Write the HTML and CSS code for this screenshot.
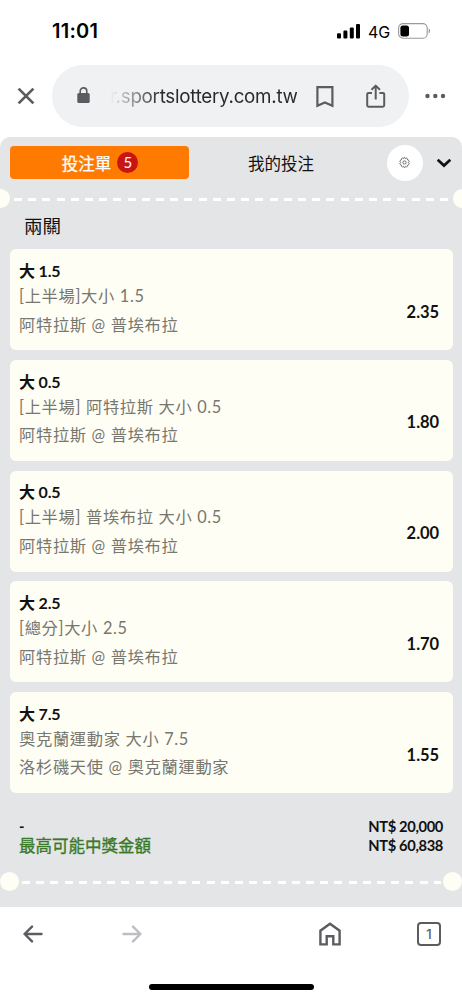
FILE: index.html
```html
<!DOCTYPE html>
<html lang="zh-Hant">
<head>
<meta charset="utf-8">
<meta name="viewport" content="width=device-width, initial-scale=1">
<title>投注單</title>
<link rel="stylesheet" href="styles.css">
</head>
<body>
<div class="screen">
  <header class="status">
    <span class="clock">11:01</span>
    <div class="status-icons">
      <svg class="signal" width="24" height="15" viewBox="0 0 24 15"><rect x="0" y="9.3" width="4" height="5.2" rx="1.1"/><rect x="6.4" y="6.6" width="4" height="7.9" rx="1.1"/><rect x="12.8" y="3.5" width="4" height="11" rx="1.1"/><rect x="19" y="0" width="4" height="14.5" rx="1.1"/></svg>
      <span class="network">4G</span>
      <svg class="battery" width="34" height="16" viewBox="0 0 34 16"><rect x=".6" y=".6" width="28.6" height="14.6" rx="4.5" fill="none" stroke="#999" stroke-width="1.1"/><rect x="2.4" y="2.4" width="8.6" height="11" rx="2.5"/><path d="M30.7 5.3c1.8.7 1.8 4.4 0 5.2z" fill="#999"/></svg>
    </div>
  </header>

  <div class="toolbar">
    <svg class="close" width="18" height="18" viewBox="0 0 18 18"><path d="M1.6 1.6l14.8 14.8M16.4 1.6L1.6 16.4"/></svg>
    <div class="address">
      <svg class="lock" width="13" height="17" viewBox="0 0 13 17"><rect x=".3" y="6" width="12.4" height="10" rx="1.6" fill="#5b5c60"/><path d="M3.2 7V4.2a3.3 3.3 0 0 1 6.6 0V7" fill="none" stroke="#5b5c60" stroke-width="1.6"/></svg>
      <span class="url">r.sportslottery.com.tw</span>
      <svg class="bookmark" width="18" height="22" viewBox="0 0 18 22"><path d="M1.4 1.2h15v18.6l-7.5-3.3-7.5 3.3z"/></svg>
      <svg class="share" width="20" height="24" viewBox="0 0 20 24"><path d="M6 9H2.5Q1.2 9 1.2 10.3v11q0 1.4 1.4 1.4h14.2q1.4 0 1.4-1.4v-11Q18.2 9 16.9 9H13.4M9.7 15.5V1.8M5.5 5.8l4.2-4.2 4.2 4.2"/></svg>
    </div>
    <svg class="more" width="21" height="6" viewBox="0 0 21 6"><circle cx="2.5" cy="3" r="2.2"/><circle cx="10.3" cy="3" r="2.2"/><circle cx="18" cy="3" r="2.2"/></svg>
  </div>

  <main class="panel">
    <div class="tabs">
      <div class="tab active">投注單<span class="count">5</span></div>
      <div class="tab">我的投注</div>
      <div class="settings">
        <svg width="12" height="12" viewBox="0 0 12 12"><path d="M4.8 1.8L5.3.8h1.4l.5 1 1.2-.6 1.1.9-.1 1.1 1.1.4.5 1.4-.8 1 .8 1-.5 1.4-1.1.4.1 1.1-1.1.9-1.2-.6-.5 1H5.3l-.5-1-1.2.6-1.1-.9.1-1.1-1.1-.4L1 7l.8-1L1 5l.5-1.4 1.1-.4-.1-1.1 1.1-.9z"/><circle cx="6" cy="6" r="1.8"/></svg>
      </div>
      <svg class="chevron" width="16" height="10" viewBox="0 0 16 10"><path d="M1.7 1.8L8 7.6l6.3-5.8"/></svg>
    </div>

    <div class="perforation edge"><i class="hole"></i><i class="dashes"></i><i class="hole"></i></div>

    <h1 class="section">兩關</h1>
    <section class="bets">
      <article class="bet"><div class="info"><h2>大 1.5</h2><p>[上半場]大小 1.5</p><p>阿特拉斯 @ 普埃布拉</p></div><b class="odds">2.35</b></article>
      <article class="bet"><div class="info"><h2>大 0.5</h2><p>[上半場] 阿特拉斯 大小 0.5</p><p>阿特拉斯 @ 普埃布拉</p></div><b class="odds">1.80</b></article>
      <article class="bet"><div class="info"><h2>大 0.5</h2><p>[上半場] 普埃布拉 大小 0.5</p><p>阿特拉斯 @ 普埃布拉</p></div><b class="odds">2.00</b></article>
      <article class="bet"><div class="info"><h2>大 2.5</h2><p>[總分]大小 2.5</p><p>阿特拉斯 @ 普埃布拉</p></div><b class="odds">1.70</b></article>
      <article class="bet"><div class="info"><h2>大 7.5</h2><p>奧克蘭運動家 大小 7.5</p><p>洛杉磯天使 @ 奧克蘭運動家</p></div><b class="odds">1.55</b></article>
    </section>

    <div class="totals">
      <div class="total"><span>-</span><span class="money">NT$ 20,000</span></div>
      <div class="total"><span class="win">最高可能中獎金額</span><span class="money">NT$ 60,838</span></div>
    </div>
    <div class="perforation inner"><i class="hole"></i><i class="dashes"></i><i class="hole"></i></div>
  </main>

  <nav class="bottom">
    <svg class="back" width="20" height="18" viewBox="0 0 20 18"><path d="M18.5 9H1.8M9 1.6L1.6 9 9 16.4"/></svg>
    <svg class="forward" width="20" height="18" viewBox="0 0 20 18"><path d="M1.5 9h16.7M11 1.6L18.4 9 11 16.4"/></svg>
    <svg class="home" width="22" height="24" viewBox="0 0 22 24"><path d="M1.4 22.4V8.7L11 1.8l9.6 6.9v13.7h-6.3v-8.2H7.7v8.2z"/></svg>
    <span class="pages">1</span>
  </nav>
  <div class="indicator"></div>
</div>
</body>
</html>
```

FILE: styles.css
```css
* { box-sizing: border-box; }
body { margin: 0; background: #fff; }
svg { display: block; flex: none; }
h1, h2, p { margin: 0; }

.screen {
  width: 462px;
  height: 1000px;
  display: flex;
  flex-direction: column;
  overflow: hidden;
  font-family: Lato, "Noto Sans CJK TC", sans-serif;
  color: #111;
}

.status {
  height: 62px;
  display: flex;
  justify-content: space-between;
  padding: 0 30px 0 52px;
  font-family: Inter, sans-serif;
  color: #000;
}
.clock { font-size: 20px; font-weight: 600; line-height: 62px; letter-spacing: 0.25px; }
.status-icons { display: flex; align-items: center; }
.network { width: 23px; margin: 1px 7px 0; font-size: 16px; font-weight: 400; }

.toolbar {
  height: 74.5px;
  flex: none;
  display: flex;
  align-items: center;
  padding: 0 16px 6px 17px;
}
.close, .bookmark, .share { fill: none; stroke: #5b5c60; stroke-width: 2.2; }
.close { stroke-width: 2.7; }
.address {
  width: 358px;
  height: 62px;
  margin: 0 16px 0 17px;
  padding: 0 23px 0 25px;
  display: flex;
  align-items: center;
  border-radius: 31px;
  background: #f0f1f3;
}
.lock { margin-top: -2px; }
.url {
  width: 187px;
  margin: 1px 0 0 20px;
  font: 400 18.8px/30px Inter, sans-serif;
  letter-spacing: -0.28px;
  text-align: right;
  white-space: nowrap;
  color: transparent;
  background: linear-gradient(90deg, #f0f1f3 0, #28292b 50px);
  -webkit-background-clip: text;
  background-clip: text;
}
.bookmark { margin: 1px 0 0 18.5px; }
.share { margin: 0 0 0 auto; stroke-linejoin: round; stroke-width: 2; }
.more { fill: #5b5c60; }

.panel {
  height: 770.5px;
  flex: none;
  border-radius: 10px 10px 0 0;
  background: #e4e5e7;
}
.tabs {
  height: 52.5px;
  display: flex;
  align-items: center;
  padding: 0 10px 0 9.5px;
}
.tab {
  width: 179px;
  height: 33px;
  display: flex;
  align-items: center;
  justify-content: center;
  font-size: 16.5px;
  border-radius: 4px;
}
.tab:nth-child(2) { margin-left: 2px; width: 181px; }
.active { padding-left: 2px; background: #ff7a00; color: #fff; -webkit-text-stroke: .25px #fff; }
.count {
  width: 21px;
  height: 21px;
  margin-left: 6px;
  border-radius: 50%;
  background: #c91414;
  font-size: 15px;
  line-height: 21px;
  text-align: center;
  -webkit-text-stroke: 0;
}
.settings {
  width: 36px;
  height: 36px;
  margin-left: 15px;
  display: grid;
  place-items: center;
  border-radius: 50%;
  background: #fff;
}
.settings svg { width: 11px; height: 11px; fill: none; stroke: #444; stroke-width: .8; }
.chevron { margin-left: 13px; fill: none; stroke: #111; stroke-width: 2.7; }

.perforation { display: flex; align-items: center; height: 19px; }
.hole { flex: none; width: 19px; height: 19px; border-radius: 50%; background: #fffef4; }
.dashes {
  flex: 1;
  height: 3px;
  margin-top: 2px;
  background: repeating-linear-gradient(90deg, #fffffc 0 8px, transparent 8px 14.2px);
}
.edge { margin: 0 -9.5px; }
.edge .dashes { margin-left: 4.7px; margin-right: 5px; }
.inner .dashes { margin-left: 2.5px; margin-right: 2px; }

.section { height: 41.4px; padding: 0 24px; font-size: 18.5px; font-weight: 400; line-height: 37px; }
.bets { display: flex; flex-direction: column; gap: 9.7px; padding: 0 9.5px; }
.bet {
  height: 101px;
  display: flex;
  justify-content: space-between;
  padding: 8.7px 13.3px 0 9.5px;
  border-radius: 6px;
  background: #fffef4;
}
.bet h2 { font-size: 16px; font-weight: 700; line-height: 25px; word-spacing: -0.2px; letter-spacing: -0.1px; }
.bet p { height: 28.5px; font-size: 16.3px; line-height: 26px; letter-spacing: 0.66px; color: #77766f; white-space: nowrap; }
.odds { font-size: 16.5px; line-height: 20px; padding-top: 43.7px; }

.totals { padding: 23.5px 19px 0; font-weight: 700; }
.total { height: 19px; display: flex; justify-content: space-between; font-size: 14.7px; line-height: 19px; }
.money { letter-spacing: -0.35px; }
.win { font-size: 16.5px; font-weight: 400; line-height: 20px; color: #3a7a28; -webkit-text-stroke: .35px #3a7a28; }
.inner { margin-top: 17px; }

.bottom {
  height: 77px;
  flex: none;
  display: flex;
  align-items: flex-start;
  padding: 14px 21px 0 23px;
  fill: none;
  stroke: #5b5c60;
  stroke-width: 2.4;
}
.back, .forward { margin-top: 4px; stroke-linecap: round; }
.forward { margin-left: 79px; stroke: #bdbec2; }
.home { margin: 1px 0 0 177px; }
.pages {
  width: 24px;
  height: 24px;
  margin-left: auto;
  margin-top: 1px;
  border: 2px solid #5b5c60;
  border-radius: 4px;
  font: 500 13px/20px Inter, sans-serif;
  text-align: center;
  color: #5b5c60;
}
.indicator { width: 165px; height: 6px; margin-left: 149px; border-radius: 3px; background: #000; }
```
